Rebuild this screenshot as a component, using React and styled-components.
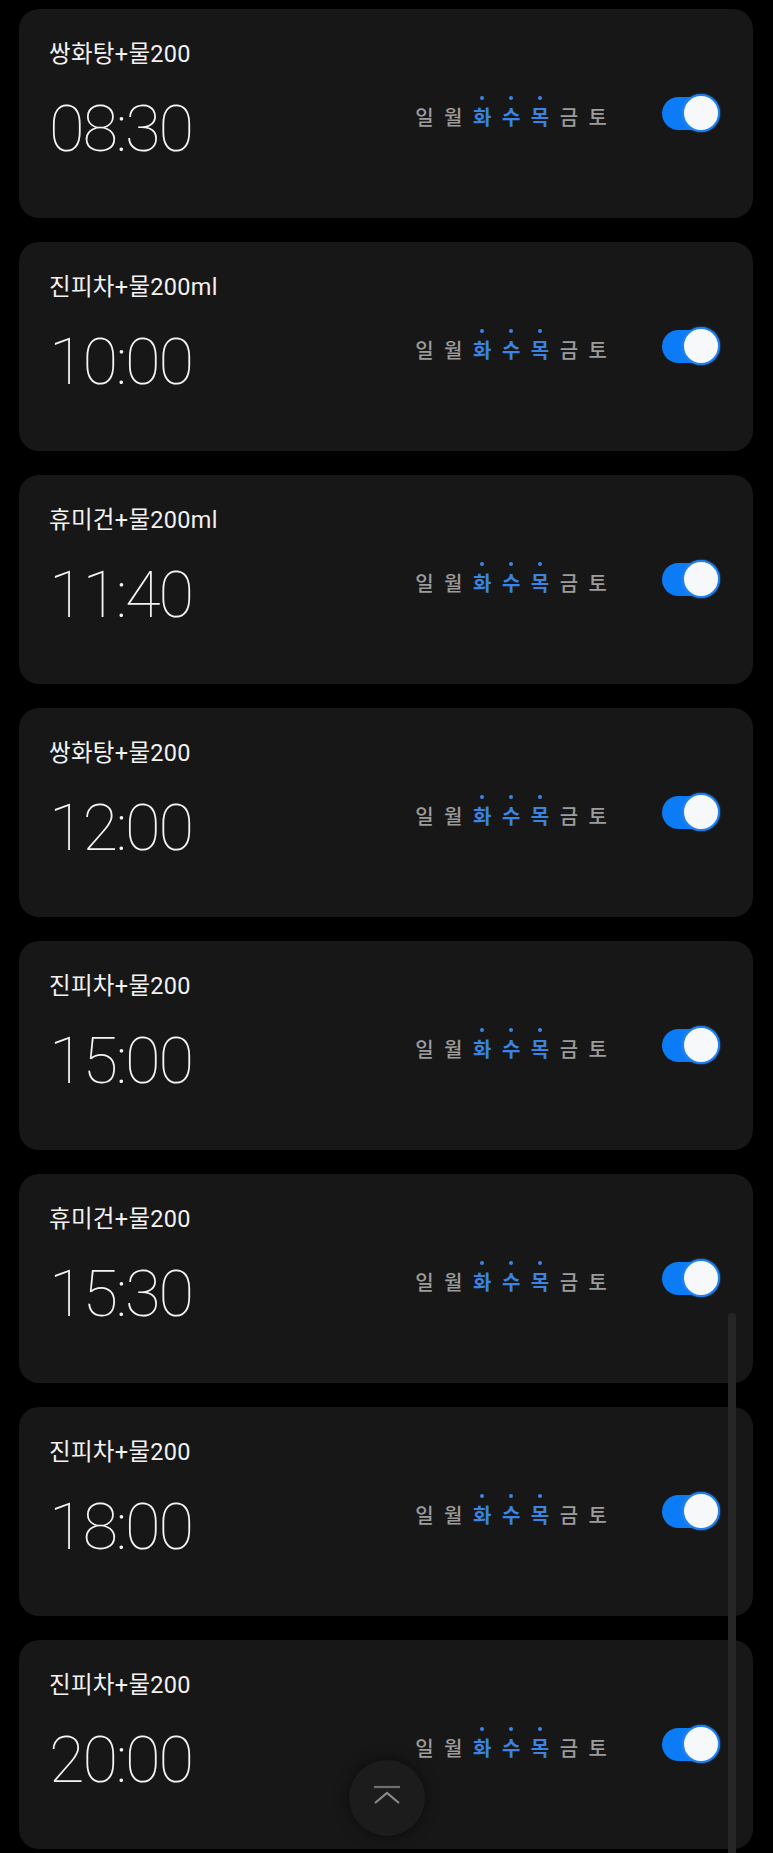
import React from "react";
import styled, { createGlobalStyle } from "styled-components";

const alarms = [
  { label: "쌍화탕+물200", time: "08:30" },
  { label: "진피차+물200ml", time: "10:00" },
  { label: "휴미건+물200ml", time: "11:40" },
  { label: "쌍화탕+물200", time: "12:00" },
  { label: "진피차+물200", time: "15:00" },
  { label: "휴미건+물200", time: "15:30" },
  { label: "진피차+물200", time: "18:00" },
  { label: "진피차+물200", time: "20:00" },
];

const days = [
  { d: "일", on: false },
  { d: "월", on: false },
  { d: "화", on: true },
  { d: "수", on: true },
  { d: "목", on: true },
  { d: "금", on: false },
  { d: "토", on: false },
];

const GlobalStyle = createGlobalStyle`
  html, body {
    margin: 0;
    padding: 0;
    background: #000;
  }
  body {
    font-family: "Roboto", "Noto Sans CJK KR", sans-serif;
  }
`;

const AlarmCard = ({ label, time }) => (
  <Card>
    <Left>
      <Label>{label}</Label>
      <Time>{time}</Time>
    </Left>
    <Right>
      <DayRow>
        {days.map((x) => (
          <Day key={x.d}>
            <Dot $on={x.on} />
            <DayChar $on={x.on}>{x.d}</DayChar>
          </Day>
        ))}
      </DayRow>
      <Toggle>
        <Track />
        <Knob />
      </Toggle>
    </Right>
  </Card>
);

export default function App() {
  return (
    <Page>
      <GlobalStyle />
      <List>
        {alarms.map((a, i) => (
          <AlarmCard key={i} {...a} />
        ))}
      </List>
      <ScrollBar />
      <TopButton>
        <svg width="30" height="22" viewBox="0 0 30 22" fill="none">
          <path d="M2 2 H28" stroke="#6f6f6f" strokeWidth="2.2" />
          <path d="M3 18 L15 8 L27 18" stroke="#8a8a8a" strokeWidth="2.2" />
        </svg>
      </TopButton>
    </Page>
  );
}

const Page = styled.div`
  position: relative;
  width: 773px;
  min-height: 1853px;
  background: #000;
  overflow: hidden;
`;

const List = styled.div`
  display: flex;
  flex-direction: column;
  gap: 24px;
  padding: 9px 20px 0 19px;
`;

const Card = styled.div`
  display: flex;
  align-items: center;
  height: 209px;
  padding: 0 33px 0 30px;
  box-sizing: border-box;
  background: #171717;
  border-radius: 20px;
`;

const Left = styled.div`
  flex: 1;
  align-self: stretch;
  display: flex;
  flex-direction: column;
  padding-top: 32px;
`;

const Label = styled.div`
  font-size: 23.5px;
  line-height: 27px;
  letter-spacing: 0.3px;
  color: #f2f2f2;
`;

const Time = styled.div`
  margin-top: 29px;
  font-family: "Roboto", sans-serif;
  font-weight: 100;
  font-size: 65px;
  line-height: 65px;
  letter-spacing: -2.2px;
  color: #f4f4f4;
`;

const Right = styled.div`
  display: flex;
  align-items: center;
  gap: 55px;
`;

const DayRow = styled.div`
  display: flex;
  gap: 10.5px;
  margin-top: -2px;
`;

const Day = styled.div`
  display: flex;
  flex-direction: column;
  align-items: center;
  gap: 5px;
`;

const Dot = styled.span`
  width: 4px;
  height: 4px;
  border-radius: 50%;
  background: ${(p) => (p.$on ? "#3b86e6" : "transparent")};
`;

const DayChar = styled.span`
  font-family: "Noto Sans CJK KR", sans-serif;
  font-size: 20px;
  line-height: 24px;
  font-weight: ${(p) => (p.$on ? 700 : 500)};
  color: ${(p) => (p.$on ? "#3a84e3" : "#9c9c9c")};
`;

const Toggle = styled.div`
  position: relative;
  width: 58px;
  height: 38px;
  margin-top: -2px;
`;

const Track = styled.div`
  position: absolute;
  left: 0;
  right: 2px;
  top: 3px;
  bottom: 2px;
  border-radius: 17px;
  background: #0c7cf6;
`;

const Knob = styled.div`
  position: absolute;
  right: 0;
  top: 0;
  width: 34px;
  height: 34px;
  border-radius: 50%;
  background: #f7f8fa;
  border: 2px solid #1f80f0;
  box-shadow: 0 0 2px rgba(40, 140, 255, 0.9);
`;

const ScrollBar = styled.div`
  position: absolute;
  left: 728px;
  top: 1313px;
  bottom: 0;
  width: 8px;
  border-radius: 4px 4px 0 0;
  background: #262626;
`;

const TopButton = styled.div`
  position: absolute;
  left: 349px;
  top: 1760px;
  width: 76px;
  height: 76px;
  border-radius: 50%;
  background: #1c1c1c;
  box-shadow: 0 0 14px rgba(0, 0, 0, 0.55);
  display: flex;
  align-items: center;
  justify-content: center;
  padding-bottom: 4px;
  box-sizing: border-box;
`;
